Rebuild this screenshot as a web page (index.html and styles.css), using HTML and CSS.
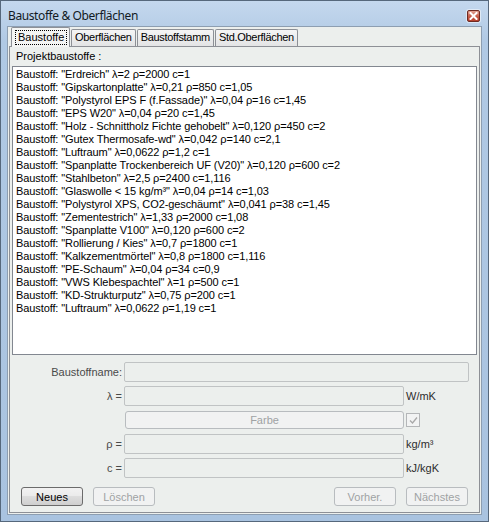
FILE: index.html
```html
<!DOCTYPE html>
<html lang="de">
<head>
<meta charset="utf-8">
<title>Baustoffe & Oberflächen</title>
<link rel="stylesheet" href="styles.css">
</head>
<body>
<div class="window">
  <div class="titlebar">
    <span class="title">Baustoffe &amp; Oberflächen</span>
    <span class="close">
      <svg width="9" height="8" viewBox="0 0 9 8"><path d="M1.5 1 L7.5 7 M7.5 1 L1.5 7" stroke="#fff" stroke-width="2" stroke-linecap="square"/></svg>
    </span>
  </div>
  <div class="client">
    <div class="tabs">
      <div class="tab active"><span class="focus">Baustoffe</span></div>
      <div class="tab">Oberflächen</div>
      <div class="tab">Baustoffstamm</div>
      <div class="tab">Std.Oberflächen</div>
    </div>
    <div class="panel">
      <div class="caption">Projektbaustoffe :</div>
      <ul class="list">
        <li>Baustoff: "Erdreich" λ=2 ρ=2000 c=1</li>
        <li>Baustoff: "Gipskartonplatte" λ=0,21 ρ=850 c=1,05</li>
        <li>Baustoff: "Polystyrol EPS F (f.Fassade)" λ=0,04 ρ=16 c=1,45</li>
        <li>Baustoff: "EPS W20" λ=0,04 ρ=20 c=1,45</li>
        <li>Baustoff: "Holz - Schnittholz Fichte gehobelt" λ=0,120 ρ=450 c=2</li>
        <li>Baustoff: "Gutex Thermosafe-wd" λ=0,042 ρ=140 c=2,1</li>
        <li>Baustoff: "Luftraum" λ=0,0622 ρ=1,2 c=1</li>
        <li>Baustoff: "Spanplatte Trockenbereich UF (V20)" λ=0,120 ρ=600 c=2</li>
        <li>Baustoff: "Stahlbeton" λ=2,5 ρ=2400 c=1,116</li>
        <li>Baustoff: "Glaswolle &lt; 15 kg/m³" λ=0,04 ρ=14 c=1,03</li>
        <li>Baustoff: "Polystyrol XPS, CO2-geschäumt" λ=0,041 ρ=38 c=1,45</li>
        <li>Baustoff: "Zementestrich" λ=1,33 ρ=2000 c=1,08</li>
        <li>Baustoff: "Spanplatte V100" λ=0,120 ρ=600 c=2</li>
        <li>Baustoff: "Rollierung / Kies" λ=0,7 ρ=1800 c=1</li>
        <li>Baustoff: "Kalkzementmörtel" λ=0,8 ρ=1800 c=1,116</li>
        <li>Baustoff: "PE-Schaum" λ=0,04 ρ=34 c=0,9</li>
        <li>Baustoff: "VWS Klebespachtel" λ=1 ρ=500 c=1</li>
        <li>Baustoff: "KD-Strukturputz" λ=0,75 ρ=200 c=1</li>
        <li>Baustoff: "Luftraum" λ=0,0622 ρ=1,19 c=1</li>
      </ul>
      <div class="form">
        <label class="lbl">Baustoffname:</label>
        <div class="field wide"></div>

        <label class="lbl">λ =</label>
        <div class="field"></div>
        <span class="unit">W/mK</span>

        <span></span>
        <div class="btn disabled colorbtn">Farbe</div>
        <span class="check"><svg width="9" height="9" viewBox="0 0 9 9"><path d="M1 4.5 L3.5 7 L8 1.5" fill="none" stroke="#a8a8a8" stroke-width="1.3"/></svg></span>

        <label class="lbl">ρ =</label>
        <div class="field"></div>
        <span class="unit">kg/m³</span>

        <label class="lbl">c =</label>
        <div class="field"></div>
        <span class="unit">kJ/kgK</span>
      </div>
      <div class="buttons">
        <div class="group">
          <div class="btn default">Neues</div>
          <div class="btn disabled">Löschen</div>
        </div>
        <div class="group">
          <div class="btn disabled">Vorher.</div>
          <div class="btn disabled">Nächstes</div>
        </div>
      </div>
    </div>
  </div>
</div>
</body>
</html>
```
FILE: styles.css
```css
* { box-sizing: border-box; }
html, body { margin: 0; padding: 0; }
body { width: 489px; height: 522px; overflow: hidden; background: #fff; }

.window {
  width: 489px;
  height: 522px;
  border: 1px solid #56687c;
  background: linear-gradient(#c4d8ee, #b0c9e4 40px, #a9c3e0);
  display: flex;
  flex-direction: column;
  padding: 0 6px 6px 6px;
  font-family: "Liberation Sans", Arial, sans-serif;
  font-size: 11px;
  color: #000;
}

.titlebar {
  height: 25px;
  flex: none;
  display: flex;
  align-items: center;
  justify-content: space-between;
  padding: 4px 2px 0 1px;
}
.title {
  font-family: "Noto Sans", "Open Sans", sans-serif;
  font-size: 12px;
  letter-spacing: -0.4px;
  color: #121a24;
}
.close {
  width: 13px;
  height: 12px;
  border: 1px solid #6e2a22;
  border-radius: 2px;
  background: linear-gradient(#e0a394, #c8604c 50%, #b8402c);
  display: flex;
  align-items: center;
  justify-content: center;
  box-shadow: 0 0 0 1px rgba(255,255,255,0.5);
}
.close svg { display: block; }

.client {
  flex: 1;
  background: #ecefed;
  border: 1px solid #8d9eb1;
  display: flex;
  flex-direction: column;
  padding: 0 1px 1px 1px;
}

.tabs {
  display: flex;
  align-items: flex-end;
  height: 19px;
  padding-left: 2px;
  position: relative;
  z-index: 1;
}
.tab {
  height: 17px;
  padding: 0 3px;
  border: 1px solid #8d9096;
  border-bottom: none;
  background: linear-gradient(#f5f5f5, #e3e4e5);
  margin-right: 1px;
  line-height: 15px;
  color: #000;
  border-radius: 2px 2px 0 0;
  letter-spacing: -0.3px;
}
.tab.active {
  height: 20px;
  margin-bottom: -1px;
  background: #f4f5f4;
  padding: 2px 3px 0 3px;
  line-height: 14px;
  margin-right: 1px;
  width: 59px;
  letter-spacing: 0;
}
.focus {
  display: inline-block;
  border: 1px dotted #000;
  padding: 0 2px;
  line-height: 13px;
}

.panel {
  flex: 1;
  border: 1px solid #8d9096;
  background: #ecefed;
  padding: 1px 2px 0 2px;
  display: flex;
  flex-direction: column;
}
.caption {
  padding-left: 4px;
  height: 18px;
  line-height: 13px;
  padding-top: 2px;
}
.list {
  list-style: none;
  margin: 0;
  height: 289px;
  border: 1px solid #828790;
  background: #fff;
  padding: 1px 3px 0 3px;
  flex: none;
}
.list li {
  height: 13px;
  line-height: 13px;
  white-space: nowrap;
  letter-spacing: -0.1px;
}

.form {
  margin-top: 7px;
  display: grid;
  grid-template-columns: 110px 280px auto;
  grid-auto-rows: 20px;
  column-gap: 2px;
  row-gap: 4px;
  align-items: center;
}
.lbl {
  text-align: right;
  color: #4a4a4a;
}
.field {
  height: 20px;
  border: 1px solid #c0c3c4;
  border-radius: 2px;
  background: #ecefed;
}
.field.wide { grid-column: 2 / 4; margin-right: 8px; }
.unit { color: #2c2c2c; }

.check {
  width: 14px;
  height: 14px;
  border: 1px solid #b4b6b8;
  background: #f2f3f3;
  display: flex;
  align-items: center;
  justify-content: center;
}

.btn {
  height: 19px;
  width: 62px;
  border-radius: 3px;
  display: flex;
  align-items: center;
  justify-content: center;
}
.btn.default {
  border: 1px solid #6b6b6b;
  background: linear-gradient(#f2f2f2 0, #ebebeb 45%, #dddddd 50%, #cfcfcf 100%);
  color: #000;
}
.btn.disabled {
  border: 1px solid #b8bcbf;
  background: #f1f2f2;
  color: #9fa2a4;
}
.btn.colorbtn {
  height: 18px;
  margin-left: 1px;
  width: 279px;
}

.buttons {
  margin-top: 9px;
  display: flex;
  justify-content: space-between;
  padding: 0 9px 0 9px;
}
.group { display: flex; gap: 10px; }
```
